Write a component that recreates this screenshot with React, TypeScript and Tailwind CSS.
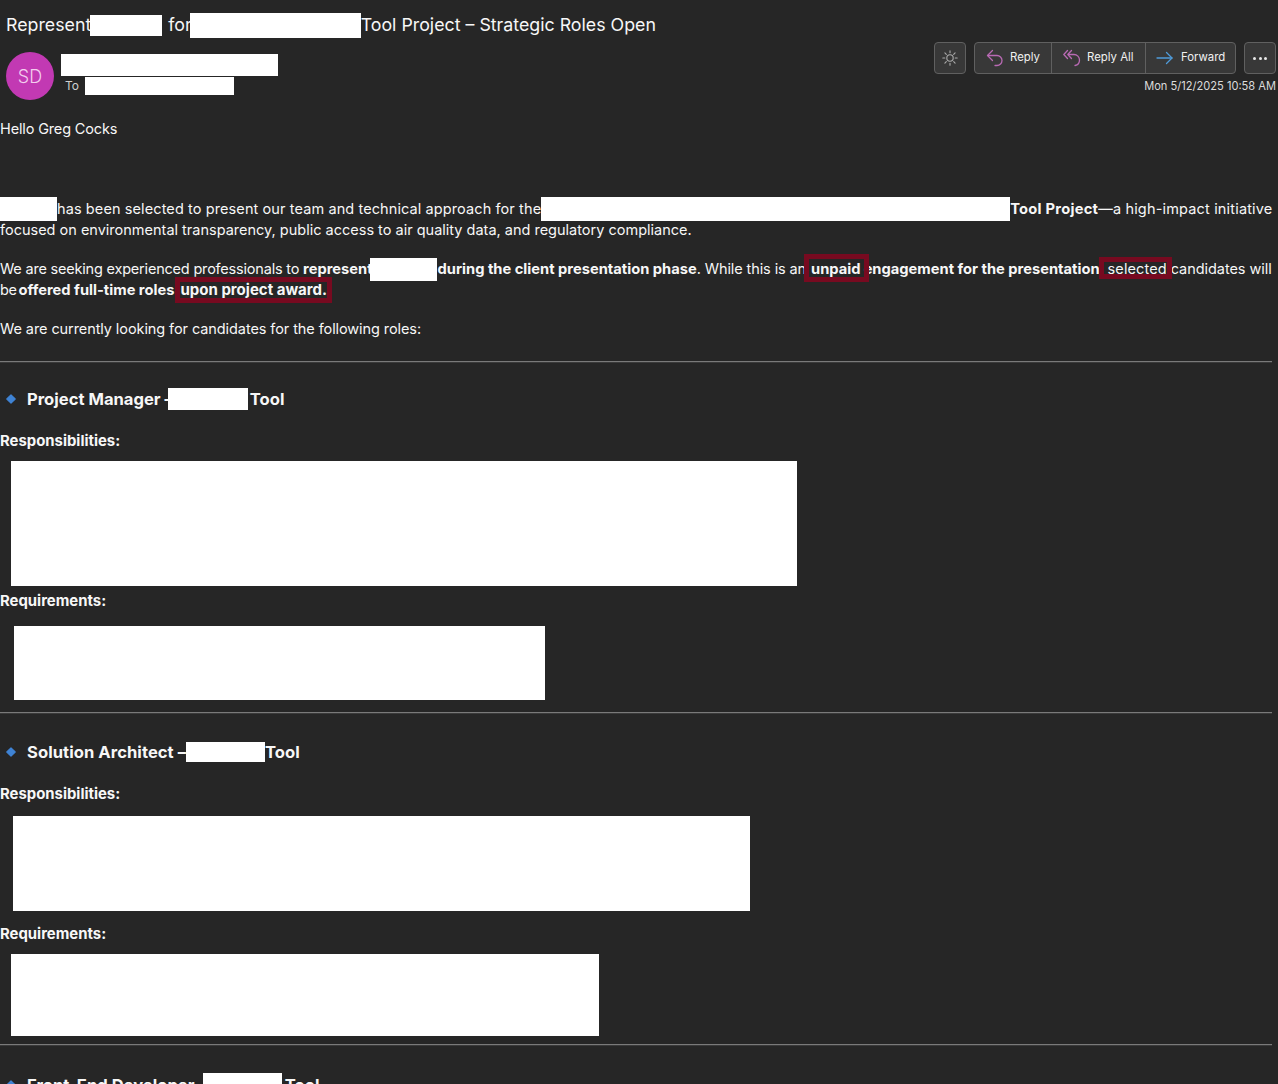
import React from "react";

function R({ w, h, className = "" }: { w: number; h: number; className?: string }) {
  return <span className={"relative -top-px inline-block bg-white align-middle -my-3 " + className} style={{ width: w, height: h }} />;
}

function Mark({ children, className = "", box }: { children: React.ReactNode; className?: string; box: string }) {
  return (
    <span className={"relative " + className}>
      {children}
      <span className={"absolute border-[5px] border-[#770a20] " + box} />
    </span>
  );
}

function Diamond() {
  return (
    <svg width="10" height="10" viewBox="0 0 10 10" className="shrink-0">
      <path d="M5 .8 9.200 5 5 9.200.8 5Z" fill="#3f83d4" stroke="#3f83d4" strokeLinejoin="round" strokeWidth="1.200" />
    </svg>
  );
}

function ReplyIcon() {
  return (
    <svg width="18" height="18" viewBox="0 0 18 18" fill="none" stroke="#b96ab4" strokeWidth="1.300" strokeLinecap="round" strokeLinejoin="round">
      <path d="M6.500 1.500 1.500 6.500l5 5" />
      <path d="M2 6.500h9a5 5 0 0 1 5 5 5 5 0 0 1-5 5H9" />
    </svg>
  );
}

function ReplyAllIcon() {
  return (
    <svg width="18" height="18" viewBox="0 0 18 18" fill="none" stroke="#b96ab4" strokeWidth="1.300" strokeLinecap="round" strokeLinejoin="round">
      <path d="M4.500 1.500.8 5.500l3.700 4" />
      <path d="M8.500 1.500 4.800 5.500l3.700 4" />
      <path d="M5.500 5.500H11a5.500 5.500 0 0 1 5.500 5.500 5.500 5.500 0 0 1-4.500 5.500" />
    </svg>
  );
}

function ForwardIcon() {
  return (
    <svg width="18" height="18" viewBox="0 0 18 18" fill="none" stroke="#4f9bd9" strokeWidth="1.300" strokeLinecap="round" strokeLinejoin="round">
      <path d="M1 9h15" />
      <path d="M10.500 3.500 16 9l-5.500 5.500" />
    </svg>
  );
}

function SunIcon() {
  return (
    <svg width="16" height="16" viewBox="0 0 16 16" fill="none" stroke="#ababab" strokeWidth="1.100" strokeLinecap="round">
      <circle cx="8" cy="8" r="3.200" />
      <path d="M8 .8v2M8 13.200v2M.8 8h2M13.200 8h2M2.900 2.900l1.400 1.400M11.700 11.700l1.400 1.400M2.900 13.100l1.400-1.400M11.700 4.300l1.400-1.400" />
    </svg>
  );
}

function Hr({ className = "" }: { className?: string }) {
  return <div className={"w-[1272px] h-[2px] border-t border-[#7a7a7a] bg-[#3a3a3a] " + className} />;
}

function RoleHeading({ children, className = "" }: { children: React.ReactNode; className?: string }) {
  return (
    <div className={"flex items-center gap-[11px] pl-[6px] h-[24px] text-[16.600px] font-bold whitespace-nowrap " + className}>
      <Diamond />
      <div>{children}</div>
    </div>
  );
}

function Label({ children, className = "" }: { children: React.ReactNode; className?: string }) {
  return <div className={"h-[21px] leading-[21px] font-bold text-[14.900px] " + className}>{children}</div>;
}

export default function App() {
  return (
    <div className="relative h-[1084px] w-[1278px] overflow-hidden bg-[#262626] text-[#f7f7f7] font-['Inter','Noto_Sans',sans-serif] text-[14.500px] leading-[21px]">
      {/* Header */}
      <div className="h-[118px] flex flex-col">
        <div className="h-[42px] pl-[6px] pt-[13px] text-[17.800px] leading-[24px] whitespace-nowrap">
          Represent
          <R w={72} h={21} className="-ml-[1px]" />
          <span className="ml-[1px]"> for</span>
          <R w={171} h={25} className="-ml-[2px]" />
          Tool Project – Strategic Roles Open
        </div>
        <div className="flex justify-between pl-[6px] pr-[2px]">
          <div className="flex gap-[7px] pt-[10px]">
            <div className="w-[48px] h-[48px] rounded-full bg-[#c239b3] flex items-center justify-center text-[#f3cdee] text-[18px] font-light">SD</div>
            <div className="flex flex-col pt-[2px]">
              <div className="w-[217px] h-[22px] bg-white" />
              <div className="flex items-center h-[18px] mt-[1px] pl-[4px] gap-[6px] text-[12px] leading-[18px] text-[#d0d0d0]">
                <span>To</span>
                <div className="w-[149px] h-[18px] bg-white" />
              </div>
            </div>
          </div>
          <div className="flex flex-col items-end">
            <div className="flex gap-[8px] text-[11.400px] leading-[16px] text-[#f0f0f0]">
              <button className="w-[32px] h-[32px] rounded-[4px] border border-[#606060] bg-[#383838] flex items-center justify-center"><SunIcon /></button>
              <div className="flex h-[32px] rounded-[4px] border border-[#606060] bg-[#383838]">
                <div className="w-[77px] flex items-center gap-[6px] pl-[11px] border-r border-[#606060]"><ReplyIcon /><span className="-mt-[2px]">Reply</span></div>
                <div className="w-[94px] flex items-center gap-[6px] pl-[11px] border-r border-[#606060]"><ReplyAllIcon /><span className="-mt-[2px]">Reply All</span></div>
                <div className="w-[89px] flex items-center gap-[7px] pl-[10px]"><ForwardIcon /><span className="-mt-[2px]">Forward</span></div>
              </div>
              <button className="w-[32px] h-[32px] rounded-[4px] border border-[#606060] bg-[#383838] flex items-center justify-center gap-[2.500px]">
                <span className="w-[3px] h-[3px] rounded-full bg-[#e8e8e8]" />
                <span className="w-[3px] h-[3px] rounded-full bg-[#e8e8e8]" />
                <span className="w-[3px] h-[3px] rounded-full bg-[#e8e8e8]" />
              </button>
            </div>
            <div className="mt-[2px] text-[11.100px] leading-[20px] text-[#dcdcdc] whitespace-nowrap">Mon 5/12/2025 10:58 AM</div>
          </div>
        </div>
      </div>

      {/* Body */}
      <div className="whitespace-nowrap [&_b]:text-[14.700px]">
        <div className="h-[21px] tracking-[-0.15px]">Hello Greg Cocks</div>
        <div className="mt-[59px] h-[21px]">
          <R w={57} h={24} />
          <span className="tracking-[0.1px]">has been selected to present our team and technical approach for the</span>
          <R w={469} h={24} />
          <b className="tracking-[0.25px]">Tool Project</b>
          <span className="tracking-[0.17px]">—a high-impact initiative</span>
        </div>
        <div className="h-[21px]">focused on environmental transparency, public access to air quality data, and regulatory compliance.</div>
        <div className="mt-[18px] h-[21px]">
          <span className="tracking-[-0.2px]">We are seeking experienced professionals to </span>
          <b>represent</b>
          <R w={67} h={23} className="-ml-[3px]" />
          <b className="ml-px">during the client presentation phase</b>
          <span className="tracking-[-0.1px]">. While this is an </span>
          <Mark className="font-bold text-[14.700px] ml-[1px]" box="-left-[7px] -right-[8px] -top-[6px] -bottom-[4px]">unpaid</Mark>{" "}
          <b className="-ml-px">engagement for the presentation</b>{" "}
          <Mark className="ml-[4px] tracking-[0.1px]" box="-left-[9px] -right-[5px] -top-[3px] -bottom-[2px]">selected</Mark>
          <span className="ml-[4px] tracking-[-0.05px]">candidates will</span>
        </div>
        <div className="h-[21px]">
          <span className="-mr-[2px] tracking-[-0.5px]">be</span> <b>offered full-time roles</b>{" "}
          <Mark className="font-bold text-[15px] ml-[2px]" box="-left-[6px] -right-[5px] -top-[3px] -bottom-[4px]">upon project award.</Mark>
        </div>
        <div className="mt-[18px] h-[21px] tracking-[-0.085px]">We are currently looking for candidates for the following roles:</div>
      </div>

      <Hr className="mt-[22px]" />
      <RoleHeading className="mt-[24px]">
        Project Manager –<R w={80} h={22} className="-ml-[5px]" />
        <span className="ml-[2px]">Tool</span>
      </RoleHeading>
      <Label className="mt-[20px]">Responsibilities:</Label>
      <div className="ml-[11px] mt-[9px] w-[786px] h-[125px] bg-white" />
      <Label className="mt-[5px]">Requirements:</Label>
      <div className="ml-[14px] mt-[14px] w-[531px] h-[74px] bg-white" />
      <Hr className="mt-[12px]" />

      <RoleHeading className="mt-[26px]">
        <span className="tracking-[0.05px]">Solution Architect –</span>
        <R w={79} h={20} />
        <span>Tool</span>
      </RoleHeading>
      <Label className="mt-[20px]">Responsibilities:</Label>
      <div className="ml-[13px] mt-[11px] w-[737px] h-[95px] bg-white" />
      <Label className="mt-[13px]">Requirements:</Label>
      <div className="ml-[11px] mt-[9px] w-[588px] h-[82px] bg-white" />
      <Hr className="mt-[8px]" />

      <RoleHeading className="mt-[27px]">
        Front-End Developer –<R w={79} h={23} className="-ml-[4px]" />
        <span className="ml-[3px]">Tool</span>
      </RoleHeading>
    </div>
  );
}
